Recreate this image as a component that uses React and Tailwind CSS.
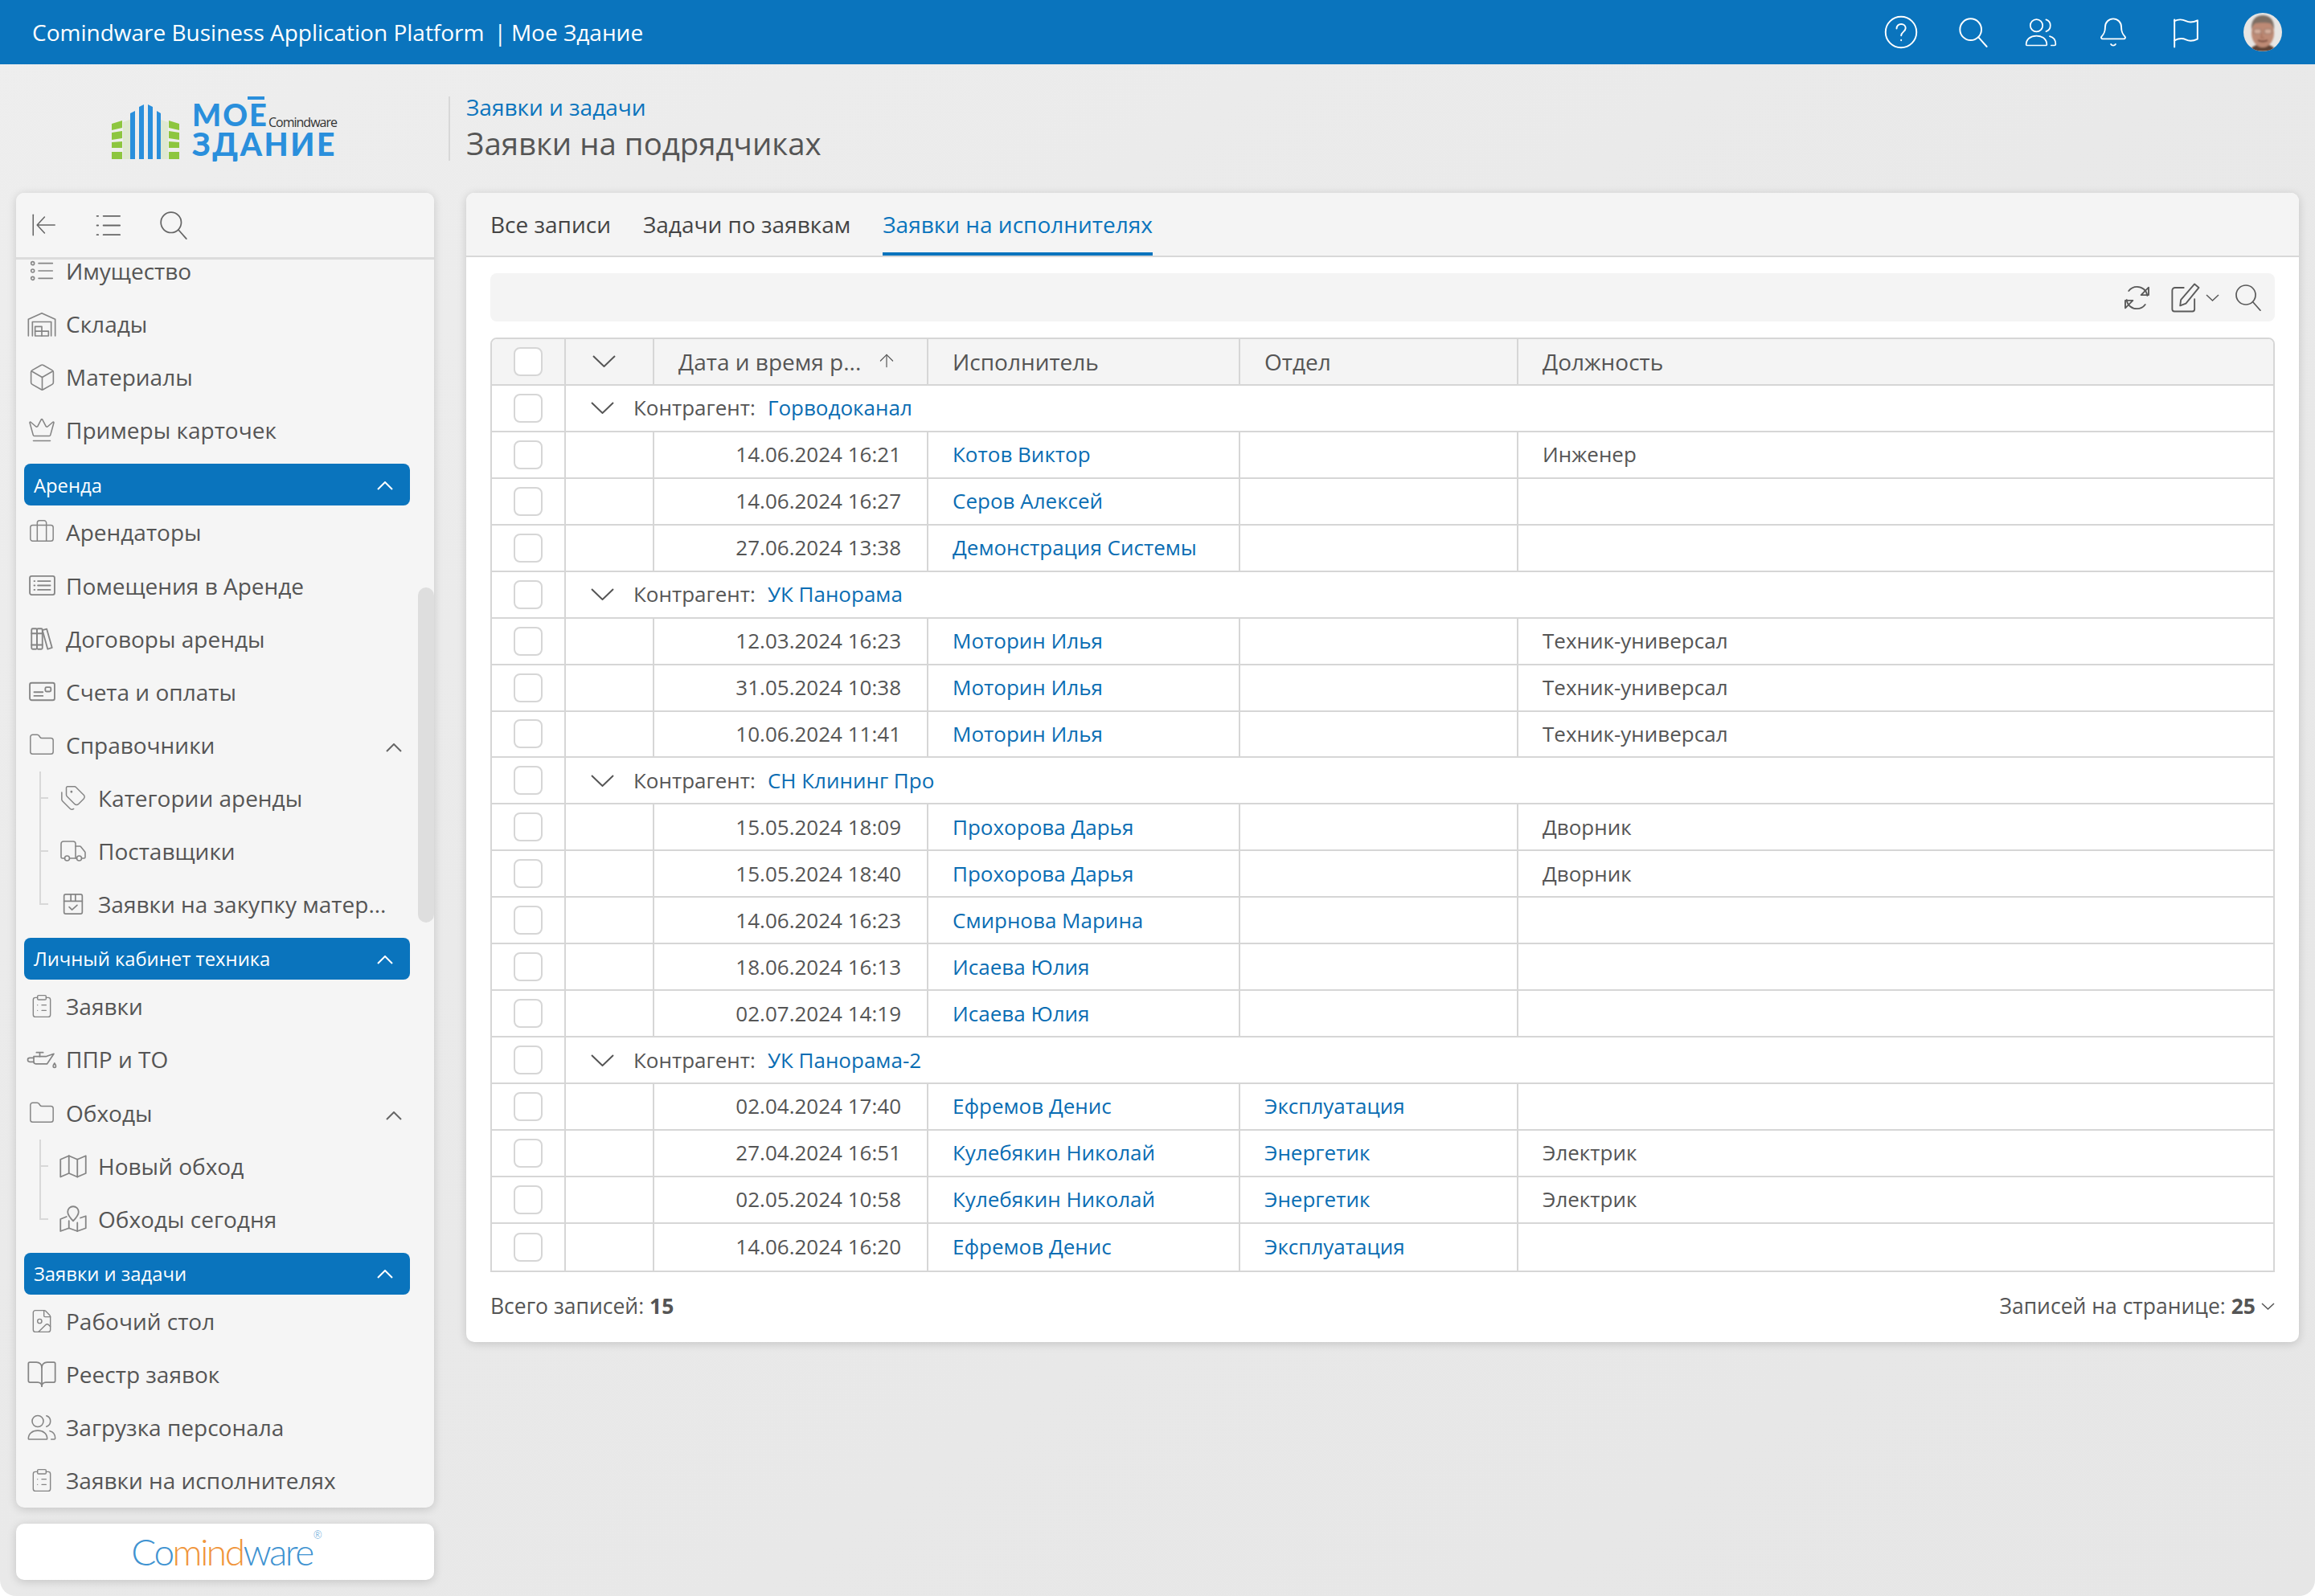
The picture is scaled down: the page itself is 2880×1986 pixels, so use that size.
import React from "react";
import { Box, Crown, Briefcase, Folder, Tags, Truck, ClipboardList, FileImage, BookOpen, Bell, ArrowUp } from "lucide-react";

const Svg = ({ size = 36, sw = 1.2, children, className = "" }) => (
  <svg width={size} height={size} viewBox="0 0 24 24" fill="none" stroke="currentColor" strokeWidth={sw} strokeLinecap="round" strokeLinejoin="round" className={className}>{children}</svg>
);
const ListDots = (p) => <Svg {...p}><circle cx="3.500" cy="5" r="1.500"/><circle cx="3.500" cy="12" r="1.500"/><circle cx="3.500" cy="19" r="1.500"/><path d="M9 5h13M9 12h13M9 19h13"/></Svg>;
const Store = (p) => <Svg {...p}><path d="M2 21V8.500L12 4l10 4.500V21"/><path d="M5 21V10.500h14V21"/><rect x="7" y="14" width="5" height="7"/><path d="M7 17.500h10V21H12"/></Svg>;
const RoomList = (p) => <Svg {...p}><rect x="2" y="4.500" width="20" height="15" rx="1.500"/><path d="M8.500 8.500h10M8.500 12h10M8.500 15.500h10M5.500 8.500h.5M5.500 12h.5M5.500 15.500h.5"/></Svg>;
const Books = (p) => <Svg {...p}><rect x="3.500" y="3.500" width="4.500" height="17" rx="1"/><rect x="8" y="3.500" width="4.500" height="17" rx="1"/><path d="M12.500 4.800l3.600-1 4.400 15.500-3.600 1.200z"/><path d="M3.500 7.500h9M3.500 17h9"/></Svg>;
const Bill = (p) => <Svg {...p}><rect x="2" y="5" width="20" height="14" rx="1.500"/><path d="M5.500 12.500h7M5.500 15.500h7"/><rect x="14.500" y="8.500" width="4.500" height="3.500" rx="1"/></Svg>;
const BoxCheck = (p) => <Svg {...p}><rect x="4" y="3.500" width="16" height="17" rx="1.500"/><path d="M4 9.500h16M10 3.500v6M14 3.500v6M8.500 14.500l2.500 2.500 4.500-4"/></Svg>;
const OilCan = (p) => <Svg {...p}><path d="M8 7h5M10.500 7v3"/><path d="M6 10h9l6-2-5 7.500H7.500c-.8 0-1.500-.7-1.500-1.500z"/><path d="M6 11H3c-.8 0-1.500.7-1.500 1.500S2.200 14 3 14h3"/><path d="M21.500 15c.7 1 1 1.500 1 2.200a1 1 0 0 1-2 0c0-.7.3-1.200 1-2.200z"/></Svg>;
const People = (p) => <Svg {...p}><circle cx="9" cy="7.500" r="4.200"/><path d="M15.500 3.500a4.200 4.200 0 0 1 0 8"/><path d="M2 20.500c0-3.800 3-6 7-6s7 2.200 7 6c0 .3-.2.500-.5.500h-13a.5.5 0 0 1-.5-.500z"/><path d="M18 14.800c2.500.6 4 2.700 4 5.400 0 .5-.3.800-.8.800H19"/></Svg>;
const HelpC = (p) => <Svg {...p}><circle cx="12" cy="12" r="10.500"/><path d="M9 9.500c0-1.800 1.300-3 3.100-3s3 1.200 3 2.800c0 2.400-3 2.600-3 5"/><path d="M12.100 17.300v.3"/></Svg>;
const FlagI = (p) => <Svg {...p}><path d="M4 22V3"/><path d="M4 4c3-1.500 6-1 8 0s5 1 8-.500v13c-3 1.500-6 1.500-8 .500s-5-1-8 .500"/></Svg>;
const Sync = (p) => <Svg {...p}><path d="M19.500 10.500C19 6.500 15.700 4 12 4 9.800 4 7.500 5 6 7"/><path d="M4.500 13.500C5 17.500 8.300 20 12 20c2.200 0 4.500-1 6-3"/><path d="M20.500 4.500v5.500h-5.500z"/><path d="M3.500 19.500V14H9z"/></Svg>;
const Pen = (p) => <Svg {...p}><path d="M11 5H5a2 2 0 0 0-2 2v13a1.500 1.500 0 0 0 1.500 1.500h12.500a1.500 1.500 0 0 0 1.500-1.500v-7"/><path d="M18.500 2.500l3 2.500-9 11-4 1.500.5-4z"/></Svg>;
const Collapse = (p) => <Svg {...p}><path d="M3 3v18"/><path d="M22 12H7M13 5l-6.500 7 6.500 7"/></Svg>;
const MenuL = (p) => <Svg {...p}><path d="M8 4h14M8 12h14M8 20h14M2.500 4h1M2.500 12h1M2.500 20h1" strokeWidth={1.300}/></Svg>;
const Glass = (p) => <Svg {...p}><circle cx="10" cy="10" r="8"/><path d="M15.800 15.800l6.200 7"/></Svg>;
const MapFold = (p) => <Svg {...p}><path d="M1.500 6.500l7-3 7 3 7-3v14.500l-7 3-7-3-7 3z"/><path d="M8.500 3.500v14.500M15.500 6.500v14.500"/></Svg>;
const MapPin2 = (p) => <Svg {...p}><path d="M6.500 10l-5 2v10l7-2.500 7 2.500 7-2.500v-10l-4.500 1.500"/><path d="M12 1.500a4.500 4.500 0 0 1 4.500 4.500c0 3-4.500 7.500-4.500 7.500S7.500 9 7.500 6A4.500 4.500 0 0 1 12 1.500z"/><path d="M8.500 13.500v6M15.500 15v7"/></Svg>;
const Chev = ({ w = 30, h = 16, up = false, sw = 2, className = "" }) => (
  <svg width={w} height={h} viewBox={`0 0 ${w} ${h}`} fill="none" stroke="currentColor" strokeWidth={sw} className={className}>
    <path d={up ? `M1 ${h - 1}L${w / 2} 1L${w - 1} ${h - 1}` : `M1 1L${w / 2} ${h - 1}L${w - 1} 1`} />
  </svg>
);

const Luc = ({ I, size = 34 }) => <I size={size} strokeWidth={1.050} />;

function Item({ icon, label, chev }) {
  return (
    <div className="h-[66.120px] flex items-center text-[#555] text-[28px]">
      <div className="w-[42px] ml-[11px] flex items-center justify-center text-[#858585] shrink-0">{icon}</div>
      <span className="ml-[9px] whitespace-nowrap">{label}</span>
      {chev && <div className="ml-auto mr-[40px] text-[#666] mt-[8px]"><Chev w={20} h={11} up /></div>}
    </div>
  );
}
function Sub({ icon, label, last }) {
  return (
    <div className="relative h-[66.120px] flex items-center text-[#555] text-[28px]">
      <div className={`absolute left-[29px] top-0 w-[2px] bg-[#d8d8d8] ${last ? "h-[33px]" : "h-[67px]"}`} />
      <div className="absolute left-[29px] top-[32px] w-[11px] h-[2px] bg-[#d8d8d8]" />
      <div className="w-[36px] ml-[53px] flex items-center justify-center text-[#858585] shrink-0">{icon}</div>
      <span className="ml-[13px] whitespace-nowrap">{label}</span>
    </div>
  );
}
function Bar({ label }) {
  return (
    <div className="mt-[9px] ml-[10px] w-[480px] h-[52px] rounded-[8px] bg-[#0a74bd] text-white text-[23.800px] flex items-center pl-[12px] pr-[21px] justify-between">
      <span className="pt-[2px]">{label}</span>
      <Chev w={20} h={11} up className="mt-[2px]" />
    </div>
  );
}

const groups = [
  ["Горводоканал", [
    ["14.06.2024 16:21", "Котов Виктор", "", "Инженер"],
    ["14.06.2024 16:27", "Серов Алексей", "", ""],
    ["27.06.2024 13:38", "Демонстрация Системы", "", ""],
  ]],
  ["УК Панорама", [
    ["12.03.2024 16:23", "Моторин Илья", "", "Техник-универсал"],
    ["31.05.2024 10:38", "Моторин Илья", "", "Техник-универсал"],
    ["10.06.2024 11:41", "Моторин Илья", "", "Техник-универсал"],
  ]],
  ["СН Клининг Про", [
    ["15.05.2024 18:09", "Прохорова Дарья", "", "Дворник"],
    ["15.05.2024 18:40", "Прохорова Дарья", "", "Дворник"],
    ["14.06.2024 16:23", "Смирнова Марина", "", ""],
    ["18.06.2024 16:13", "Исаева Юлия", "", ""],
    ["02.07.2024 14:19", "Исаева Юлия", "", ""],
  ]],
  ["УК Панорама-2", [
    ["02.04.2024 17:40", "Ефремов Денис", "Эксплуатация", ""],
    ["27.04.2024 16:51", "Кулебякин Николай", "Энергетик", "Электрик"],
    ["02.05.2024 10:58", "Кулебякин Николай", "Энергетик", "Электрик"],
    ["14.06.2024 16:20", "Ефремов Денис", "Эксплуатация", ""],
  ]],
];

const COLS = "grid grid-cols-[92px_110px_341px_388px_346px_1fr]";
const Check = () => <div className="w-[36px] h-[36px] rounded-[8px] border-2 border-[#d6d6d6] bg-white" />;
const CheckCell = () => <div className="flex items-center justify-center border-r-2 border-[#d6d6d6]"><Check /></div>;

function DataRow({ r, last }) {
  const cell = "flex items-center border-r-2 border-[#d6d6d6] pl-[30px] whitespace-nowrap";
  return (
    <div className={`${COLS} h-[57.950px] ${last ? "" : "border-b-2 border-[#d6d6d6]"}`}>
      <CheckCell />
      <div className="border-r-2 border-[#d6d6d6]" />
      <div className="flex items-center justify-end border-r-2 border-[#d6d6d6] pr-[32px]">{r[0]}</div>
      <div className={`${cell} text-[#0a6db3]`}>{r[1]}</div>
      <div className={`${cell} text-[#0a6db3]`}>{r[2]}</div>
      <div className="flex items-center pl-[30px]">{r[3]}</div>
    </div>
  );
}

function Logo() {
  return (
    <div className="flex items-start w-[560px] h-[80px]">
      <div className="relative ml-[139px] w-[280px] h-[80px]">
        <svg width="84" height="68" viewBox="0 0 84 68" className="absolute left-0 top-[10px]">
          <path d="M14 22l11-4v50H14zM58 18l12 4v46H58z" fill="#dfe8d2" />
          <g fill="#8dc63f">
            <path d="M0 24l13-4v9L0 32zM0 35l13-2v9l-13 2zM0 47l13-1v8H0zM0 59h13v9H0z" />
            <path d="M71 20l13 4v8l-13-3zM71 33l13 2v9l-13-2zM71 46l13 1v7H71zM71 59h13v9H71z" />
          </g>
          <g fill="#2a8fdc">
            <path d="M23 11l6-3v60h-6zM34 3l6-3 0 0v68h-6zM45 0l6 3v65h-6zM56 8l5 3v57h-5z" />
          </g>
        </svg>
        <div className="absolute left-[100px] top-[5px] text-[#2a8fdc] text-[38px] leading-[34px] font-[Lato] font-black tracking-[2px]">МОЕ</div>
        <div className="absolute left-[169px] top-[0px] w-[21px] h-[4px] bg-[#2a8fdc]" />
        <div className="absolute left-[100px] top-[41px] text-[#2a8fdc] text-[39px] leading-[36px] font-[Lato] font-black tracking-[2.500px] whitespace-nowrap">ЗДАНИЕ</div>
        <div className="absolute left-[195px] top-[24px] text-[#333] text-[16px] leading-[16px] tracking-[-1px] whitespace-nowrap">Comindware</div>
      </div>
    </div>
  );
}

function Avatar() {
  return (
    <svg width="48" height="48" viewBox="0 0 48 48" className="rounded-full">
      <defs><filter id="av"><feGaussianBlur stdDeviation="0.8" /></filter></defs>
      <rect width="48" height="48" fill="#e8e6e4" />
      <g filter="url(#av)">
        <path d="M8 48c2-7 8-9 16-9s14 2 16 9z" fill="#5f4234" />
        <ellipse cx="24" cy="25" rx="14" ry="18" fill="#bd8a74" />
        <path d="M10 21C9 8 16 3 24 3s15 5 14 18c-2-5-3-7-5-8-5-1-12-1-18 0-2 1-3 3-5 8z" fill="#7d6e64" />
        <rect x="13" y="20" width="9" height="6" rx="2" fill="#d4ac9a" stroke="#9a7a6c" strokeWidth="1.200" />
        <rect x="26" y="20" width="9" height="6" rx="2" fill="#d4ac9a" stroke="#9a7a6c" strokeWidth="1.200" />
        <path d="M18 34c3 2 9 2 12 0" stroke="#6f4033" strokeWidth="2" fill="none" />
        <path d="M23 26l-1 5h4" stroke="#a8705c" strokeWidth="1.500" fill="none" />
      </g>
    </svg>
  );
}

export default function App() {
  return (
    <div className="w-[2880px] h-[1986px] bg-white overflow-hidden font-['Open_Sans',sans-serif]">
      <div className="w-full h-full rounded-b-[20px] overflow-hidden bg-gradient-to-br from-[#eeeeee] via-[#e9e9e9] to-[#e6e6e6] flex flex-col">
        <header className="h-[80px] shrink-0 bg-[#0a74bd] text-white flex items-center">
          <div className="ml-[40px] text-[28px] whitespace-nowrap flex items-center">
            <span>Comindware Business Application Platform</span>
            <span className="ml-[12px]">|</span>
            <span className="ml-[6px]">Мое Здание</span>
          </div>
          <div className="ml-auto flex items-center">
            <div className="w-[44px] flex justify-center"><HelpC size={46} sw={1.050} /></div>
            <div className="ml-[46px] w-[44px] flex justify-center"><Glass size={40} sw={1.150} /></div>
            <div className="ml-[40px] w-[44px] flex justify-center"><People size={50} sw={0.950} /></div>
            <div className="ml-[46px] w-[44px] flex justify-center"><Bell size={40} strokeWidth={1.150} /></div>
            <div className="ml-[46px] w-[44px] flex justify-center"><FlagI size={43} sw={1.100} /></div>
            <div className="ml-[50px] mr-[41px]"><Avatar /></div>
          </div>
        </header>

        <div className="flex-1 flex min-h-0">
          <aside className="w-[580px] shrink-0 flex flex-col">
            <div className="h-[160px] flex items-center"><Logo /></div>
            <div className="relative ml-[20px] w-[520px] h-[1636px] rounded-[10px] bg-[#f5f5f5] shadow-[0_2px_12px_rgba(0,0,0,0.16)] overflow-hidden flex flex-col">
              <div className="h-[83px] shrink-0 border-b-[3px] border-[#dcdcdc] flex items-center text-[#666] relative z-10 bg-[#f5f5f5]">
                <div className="ml-[17px]"><Collapse size={34} sw={1.100} /></div>
                <div className="ml-[46px]"><MenuL size={35} sw={1.100} /></div>
                <div className="ml-[45px]"><Glass size={38} sw={1.100} /></div>
              </div>
              <div className="mt-[-19px]">
                <Item icon={<ListDots size={32} />} label="Имущество" />
                <Item icon={<Store size={40} sw={1} />} label="Склады" />
                <Item icon={<Luc I={Box} size={37} />} label="Материалы" />
                <Item icon={<Luc I={Crown} size={36} />} label="Примеры карточек" />
                <Bar label="Аренда" />
                <Item icon={<Luc I={Briefcase} />} label="Арендаторы" />
                <Item icon={<RoomList size={37} />} label="Помещения в Аренде" />
                <Item icon={<Books size={36} />} label="Договоры аренды" />
                <Item icon={<Bill size={37} />} label="Счета и оплаты" />
                <Item icon={<Luc I={Folder} />} label="Справочники" chev />
                <Sub icon={<Luc I={Tags} />} label="Категории аренды" />
                <Sub icon={<Luc I={Truck} size={38} />} label="Поставщики" />
                <Sub icon={<BoxCheck size={34} />} label="Заявки на закупку матер..." last />
                <div className="mt-[1px]"><Bar label="Личный кабинет техника" /></div>
                <Item icon={<Luc I={ClipboardList} size={32} />} label="Заявки" />
                <Item icon={<OilCan size={40} sw={1} />} label="ППР и ТО" />
                <Item icon={<Luc I={Folder} />} label="Обходы" chev />
                <Sub icon={<MapFold size={36} />} label="Новый обход" />
                <Sub icon={<MapPin2 size={36} />} label="Обходы сегодня" last />
                <div className="mt-[1px]"><Bar label="Заявки и задачи" /></div>
                <Item icon={<Luc I={FileImage} size={32} />} label="Рабочий стол" />
                <Item icon={<Luc I={BookOpen} size={40} />} label="Реестр заявок" />
                <Item icon={<People size={40} sw={0.950} />} label="Загрузка персонала" />
                <Item icon={<Luc I={ClipboardList} size={32} />} label="Заявки на исполнителях" />
              </div>
              <div className="absolute left-[500px] top-[491px] w-[20px] h-[417px] rounded-full bg-[#dedede]" />
            </div>
            <div className="mt-[20px] ml-[20px] w-[520px] h-[70px] rounded-[10px] bg-white shadow-[0_2px_12px_rgba(0,0,0,0.16)] flex items-center justify-center">
              <div className="mr-[8px] text-[46px] leading-[60px] font-[Lato] font-light tracking-[-2.500px] text-[#3f93d1] relative whitespace-nowrap">
                Co<span className="text-[#f0953a]">mind</span>ware<span className="absolute left-[100%] top-[2px] text-[13px] leading-[14px] tracking-normal ml-[1px]">®</span>
              </div>
            </div>
          </aside>

          <main className="w-[2280px] flex flex-col">
            <div className="h-[160px] flex items-center">
              <div className="h-[80px] border-l-2 border-[#d8d8d8] ml-[-22px] pl-[20px] flex flex-col">
                <div className="text-[#0a74bd] text-[28px] leading-[34px] mt-[-4px]">Заявки и задачи</div>
                <div className="text-[#555] text-[38.400px] leading-[50px] mt-[3px] whitespace-nowrap">Заявки на подрядчиках</div>
              </div>
            </div>

            <section className="w-[2280px] h-[1430px] rounded-[10px] bg-white shadow-[0_2px_12px_rgba(0,0,0,0.16)] overflow-hidden">
              <div className="h-[80px] bg-[#f4f4f4] border-b-2 border-[#d8d8d8] px-[30px] flex gap-[40px] text-[28px] text-[#444]">
                <div className="h-[78px] flex items-center">Все записи</div>
                <div className="h-[78px] flex items-center">Задачи по заявкам</div>
                <div className="h-[78px] pt-[4px] flex items-center text-[#0a74bd] border-b-[4px] border-[#0a74bd]">Заявки на исполнителях</div>
              </div>
              <div className="mt-[20px] mx-[30px] h-[60px] rounded-[8px] bg-[#f4f4f4] flex items-center justify-end text-[#5a5a5a]">
                <Sync size={41} sw={1.100} />
                <div className="ml-[18px]"><Pen size={43} sw={1.050} /></div>
                <Chev w={17} h={9} sw={1.500} className="ml-[4px]" />
                <div className="ml-[18px] mr-[15px]"><Glass size={36} sw={1.150} /></div>
              </div>
              <div className="mt-[20px] mx-[30px] border-2 border-[#d6d6d6] rounded-t-[8px] text-[26px] text-[#555]">
                <div className={`${COLS} h-[57.950px] bg-[#f4f4f4] border-b-2 border-[#d6d6d6] rounded-t-[6px] text-[28px]`}>
                  <CheckCell />
                  <div className="flex items-center justify-center border-r-2 border-[#d6d6d6] text-[#555] pr-[14px]"><Chev w={29} h={15} /></div>
                  <div className="flex items-center border-r-2 border-[#d6d6d6] pl-[30px] relative">Дата и время р...
                    <ArrowUp size={26} strokeWidth={1.100} className="absolute left-[276px] top-[14px]" />
                  </div>
                  <div className="flex items-center border-r-2 border-[#d6d6d6] pl-[30px]">Исполнитель</div>
                  <div className="flex items-center border-r-2 border-[#d6d6d6] pl-[30px]">Отдел</div>
                  <div className="flex items-center pl-[30px]">Должность</div>
                </div>
                {groups.map(([name, rows], gi) => (
                  <React.Fragment key={name}>
                    <div className="grid grid-cols-[92px_1fr] h-[57.950px] border-b-2 border-[#d6d6d6]">
                      <CheckCell />
                      <div className="flex items-center">
                        <div className="ml-[31px] text-[#555]"><Chev w={29} h={15} /></div>
                        <span className="ml-[24px] whitespace-nowrap">Контрагент:</span>
                        <span className="ml-[15px] text-[#0a6db3] whitespace-nowrap">{name}</span>
                      </div>
                    </div>
                    {rows.map((r, i) => (
                      <DataRow key={i} r={r} last={gi === groups.length - 1 && i === rows.length - 1} />
                    ))}
                  </React.Fragment>
                ))}
              </div>
              <div className="mt-[23px] mx-[30px] flex items-center justify-between text-[26.500px] text-[#555]">
                <div>Всего записей: <b className="font-bold">15</b></div>
                <div className="flex items-center">Записей на странице:&nbsp;<b className="font-bold">25</b><Chev w={17} h={9} sw={1.500} className="ml-[7px]" /></div>
              </div>
            </section>
          </main>
        </div>
      </div>
    </div>
  );
}
